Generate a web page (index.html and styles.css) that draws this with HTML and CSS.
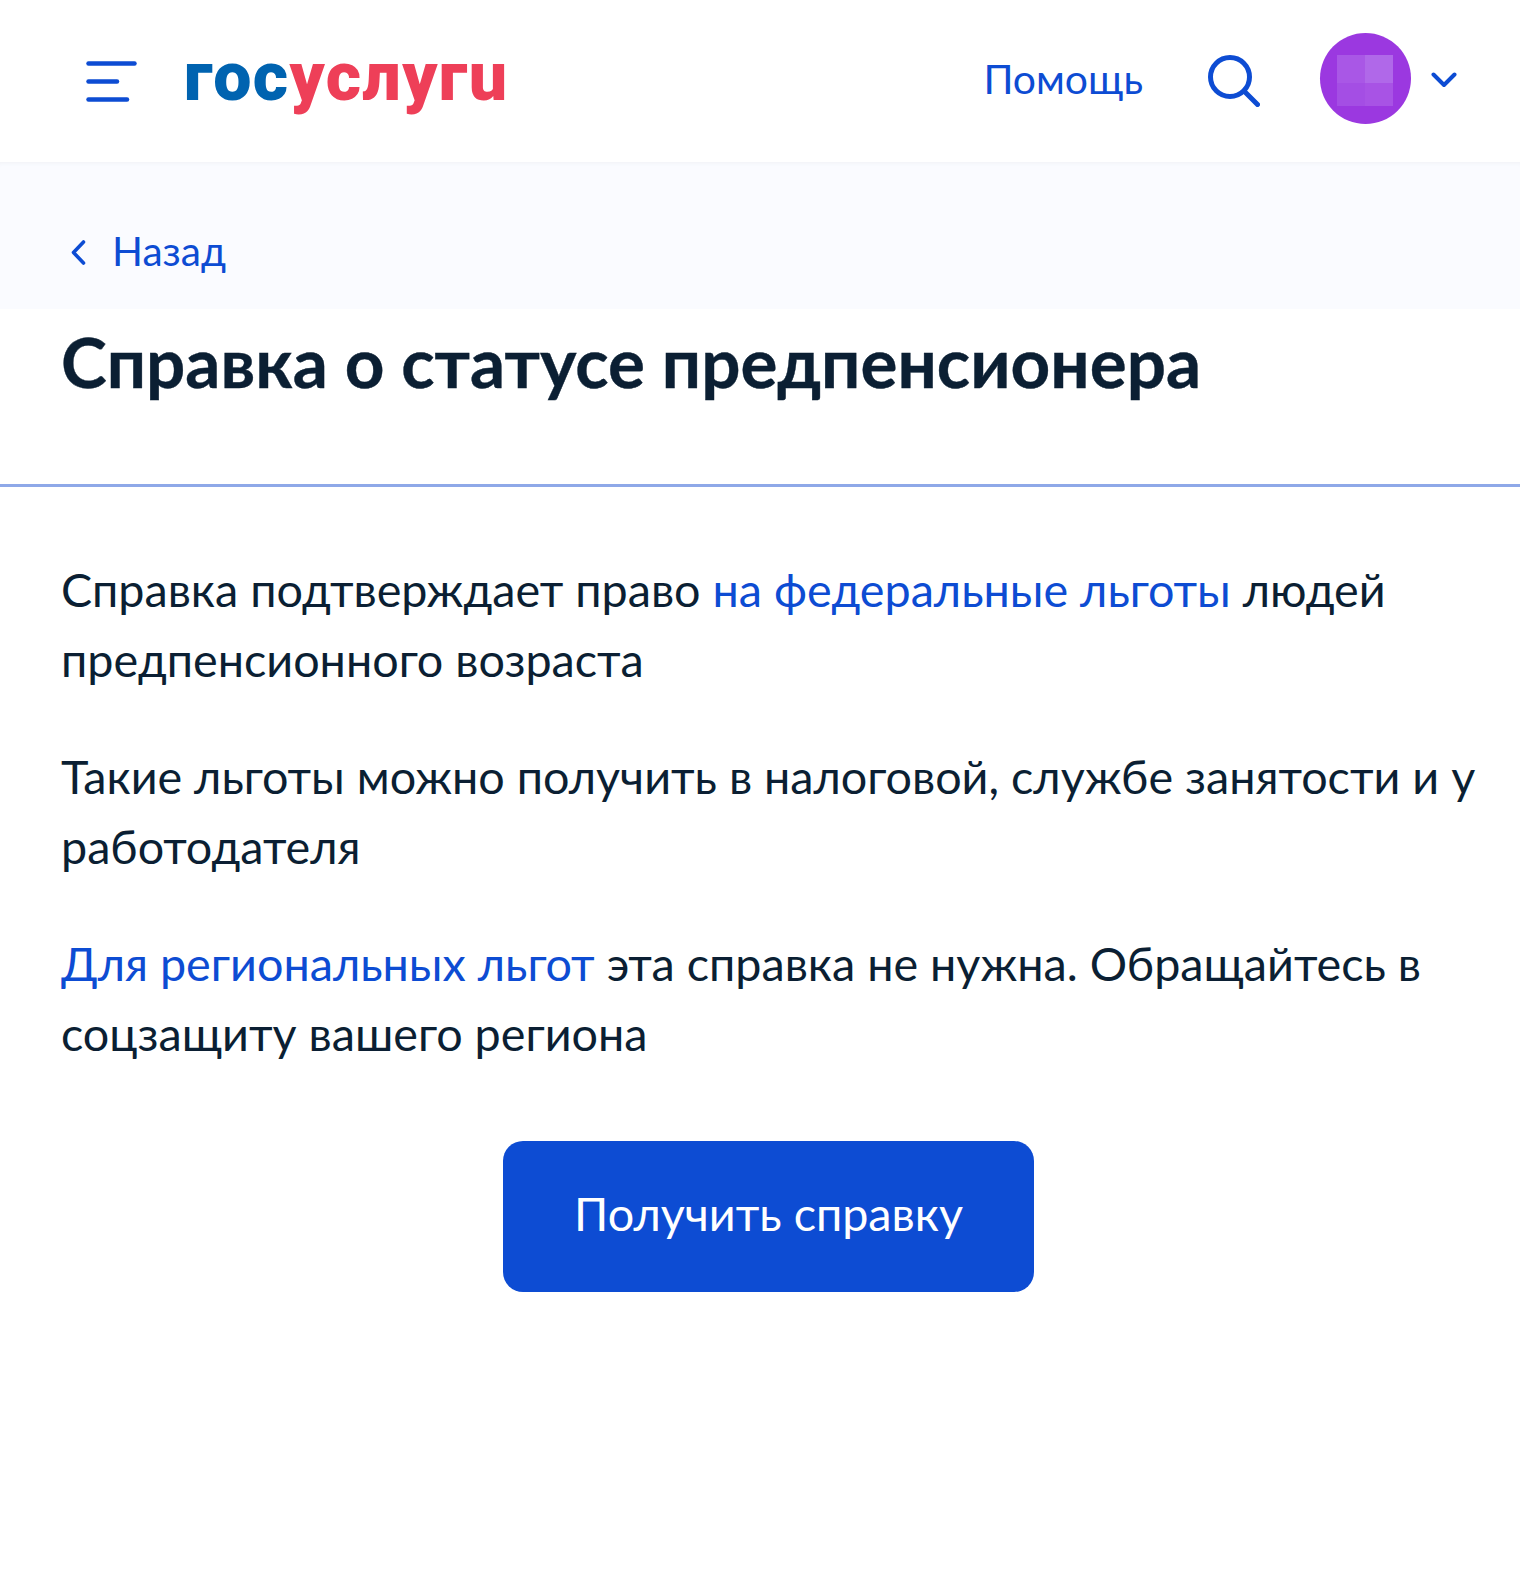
FILE: index.html
```html
<!DOCTYPE html>
<html lang="ru">
<head>
<meta charset="utf-8">
<title>Справка о статусе предпенсионера</title>
<link rel="stylesheet" href="styles.css">
</head>
<body>
<header class="header">
  <svg class="burger" width="51" height="41" viewBox="0 0 51 41" aria-hidden="true"><g fill="none" stroke="#0d4cd3" stroke-width="4.5" stroke-linecap="round"><path d="M2.500 2.500H48.500"/><path d="M2.500 20.500H31"/><path d="M2.500 38.500H41"/></g></svg>
  <div class="logo"><span class="logo-blue">гос</span><span class="logo-red">услугu</span></div>
  <div class="spacer"></div>
  <a class="help">Помощь</a>
  <svg class="search" width="52" height="52" viewBox="0 0 52 52" aria-hidden="true"><g fill="none" stroke="#0d4cd3" stroke-width="5" stroke-linecap="round"><circle cx="22" cy="22" r="19.500"/><path d="M36 36L49.500 49.500"/></g></svg>
  <div class="avatar"><div class="pix"><i class="p1"></i><i class="p2"></i><i class="p3"></i><i class="p4"></i></div></div>
  <svg class="chev" width="26" height="16" viewBox="0 0 26 16" aria-hidden="true"><path d="M2.500 2.500L13 13L23.500 2.500" fill="none" stroke="#0d4cd3" stroke-width="4" stroke-linecap="round" stroke-linejoin="round"/></svg>
</header>
<nav class="backbar">
  <svg class="back-ico" width="15" height="25" viewBox="0 0 15 25" aria-hidden="true"><path d="M12.500 2L2.500 12.500L12.500 23" fill="none" stroke="#0d4cd3" stroke-width="3.600" stroke-linecap="round" stroke-linejoin="round"/></svg>
  <a class="back">Назад</a>
</nav>
<main class="main">
  <div class="titlewrap"><h1 class="title">Справка о статусе предпенсионера</h1></div>
  <div class="content">
    <p class="para">Справка подтверждает право <a class="link">на федеральные льготы</a> людей предпенсионного возраста</p>
    <p class="para">Такие льготы можно получить в налоговой, службе занятости и у работодателя</p>
    <p class="para"><a class="link">Для региональных льгот</a> эта справка не нужна. Обращайтесь в соцзащиту вашего региона</p>
    <div class="actions"><button class="btn">Получить справку</button></div>
  </div>
</main>
</body>
</html>
```
FILE: styles.css
```css
* { box-sizing: border-box; }
html, body { margin: 0; padding: 0; background: #fff; }
body { font-family: Lato, "Noto Sans", sans-serif; color: #0b1f33; width: 1520px; height: 1584px; overflow: hidden; }
.header { height: 162px; display: flex; align-items: center; padding: 0 63px 0 86px; background: #fff; }
.burger { flex: none; }
.logo { margin-left: 47px; font-family: Roboto, sans-serif; font-weight: 900; font-size: 68px; line-height: 1; letter-spacing: 1.4px; margin-top: -8px; }
.logo-blue { color: #0063b0; }
.logo-red { color: #ee3f58; }
.spacer { flex: 1; }
.help { font-size: 40.900px; color: #0d4cd3; margin-top: -6px; }
.search { margin-left: 65px; margin-top: -1px; }
.avatar { width: 91px; height: 91px; border-radius: 50%; background: #9b38e0; margin-left: 60px; display: flex; align-items: center; justify-content: center; margin-top: -6px; }
.pix { display: grid; grid-template-columns: 28px 28px; grid-template-rows: 28px 23px; margin: 5px 2px 0 0; }
.p1 { background: #a957e6; }
.p2 { background: #b068e9; }
.p3 { background: #a44ee4; }
.p4 { background: #a853e5; }
.chev { margin-left: 20px; margin-top: -2px; }
.backbar { height: 147px; background: #fafbff; display: flex; align-items: center; padding: 30px 0 0 71px; box-shadow: inset 0 4px 4px -3px #f0f1f5; }
.back-ico { margin-top: 4px; }
.back { font-size: 40.600px; color: #0d4cd3; margin-left: 26px; }
.titlewrap { height: 178px; border-bottom: 3px solid #8ea8e8; padding: 11px 0 0 61px; }
.title { margin: 0; font-size: 69.200px; line-height: 84px; font-weight: 700; color: #0b1f33; -webkit-text-stroke: 0.4px #0b1f33; }
.content { padding: 67px 20px 0 61px; }
.para { margin: 0 0 47px; font-size: 46.700px; line-height: 70px; color: #0b1f33; }
.link { color: #0d4cd3; }
.actions { display: flex; justify-content: flex-start; margin-left: 442px; margin-top: 73px; }
.btn { width: 531px; height: 151px; padding: 0 0 7px; background: #0d4cd3; border: 0; border-radius: 20px; color: #fff; font: 46.700px Lato, sans-serif; }
```
